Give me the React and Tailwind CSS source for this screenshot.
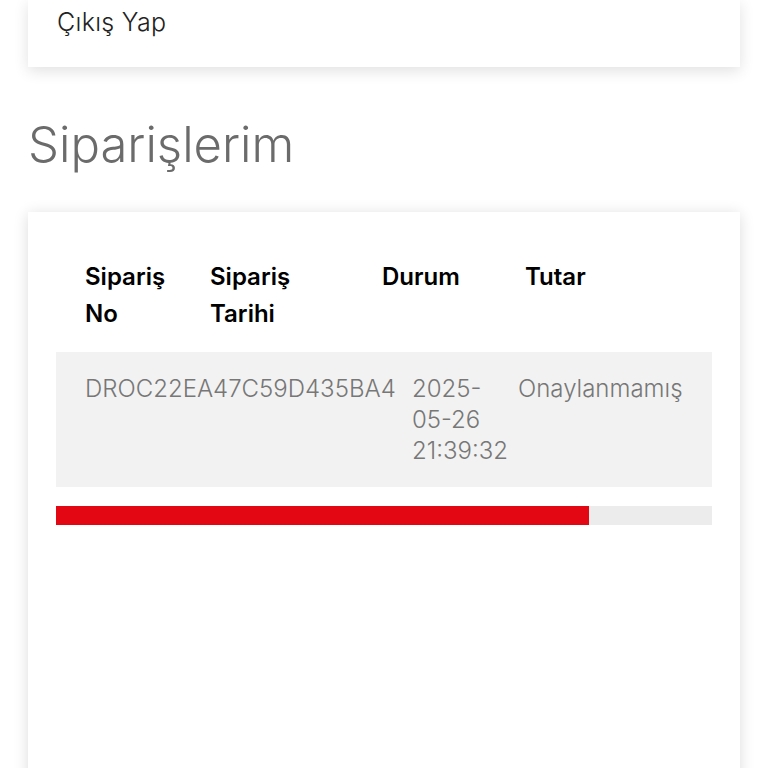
export default function App() {
  const progress = 81.2;

  return (
    <div className="min-h-[768px] bg-white font-['Inter',sans-serif] overflow-hidden">
      {/* account menu card, cut off at the top */}
      <div className="mx-[28px] bg-white pt-[3px] pb-[26px] pl-[29px] shadow-[0_4px_14px_rgba(0,0,0,0.12)]">
        <span className="text-[25px] leading-[38px] font-light tracking-[0.3px] text-[#222]">Çıkış Yap</span>
      </div>

      <h2 className="mt-[46px] ml-[28px] text-[49px] leading-[64px] font-light text-[#6b6b6b]">
        Siparişlerim
      </h2>

      <div className="mt-[35px] mx-[28px] min-h-[600px] bg-white px-[28px] pt-[46px] shadow-[0_2px_14px_rgba(0,0,0,0.14)]">
        <div className="flex pl-[29px] text-[24px] leading-[37px] font-semibold text-black">
          <div className="w-[125px]">Sipariş<br />No</div>
          <div className="w-[172px]">Sipariş<br />Tarihi</div>
          <div className="w-[143px]">Durum</div>
          <div>Tutar</div>
        </div>

        <div className="mt-[20px] flex bg-[#f2f2f2] pl-[29px] pt-[21px] pb-[21px] text-[24px] leading-[31px] font-light text-[#777]">
          <div className="w-[327px]">DROC22EA47C59D435BA4</div>
          <div className="w-[106px]">2025-<br />05-26<br />21:39:32</div>
          <div>Onaylanmamış</div>
        </div>

        <div className="mt-[19px] h-[19px] bg-[#ececec]">
          <div className="h-full bg-[#e30613]" style={{ width: `${progress}%` }} />
        </div>
      </div>
    </div>
  );
}
